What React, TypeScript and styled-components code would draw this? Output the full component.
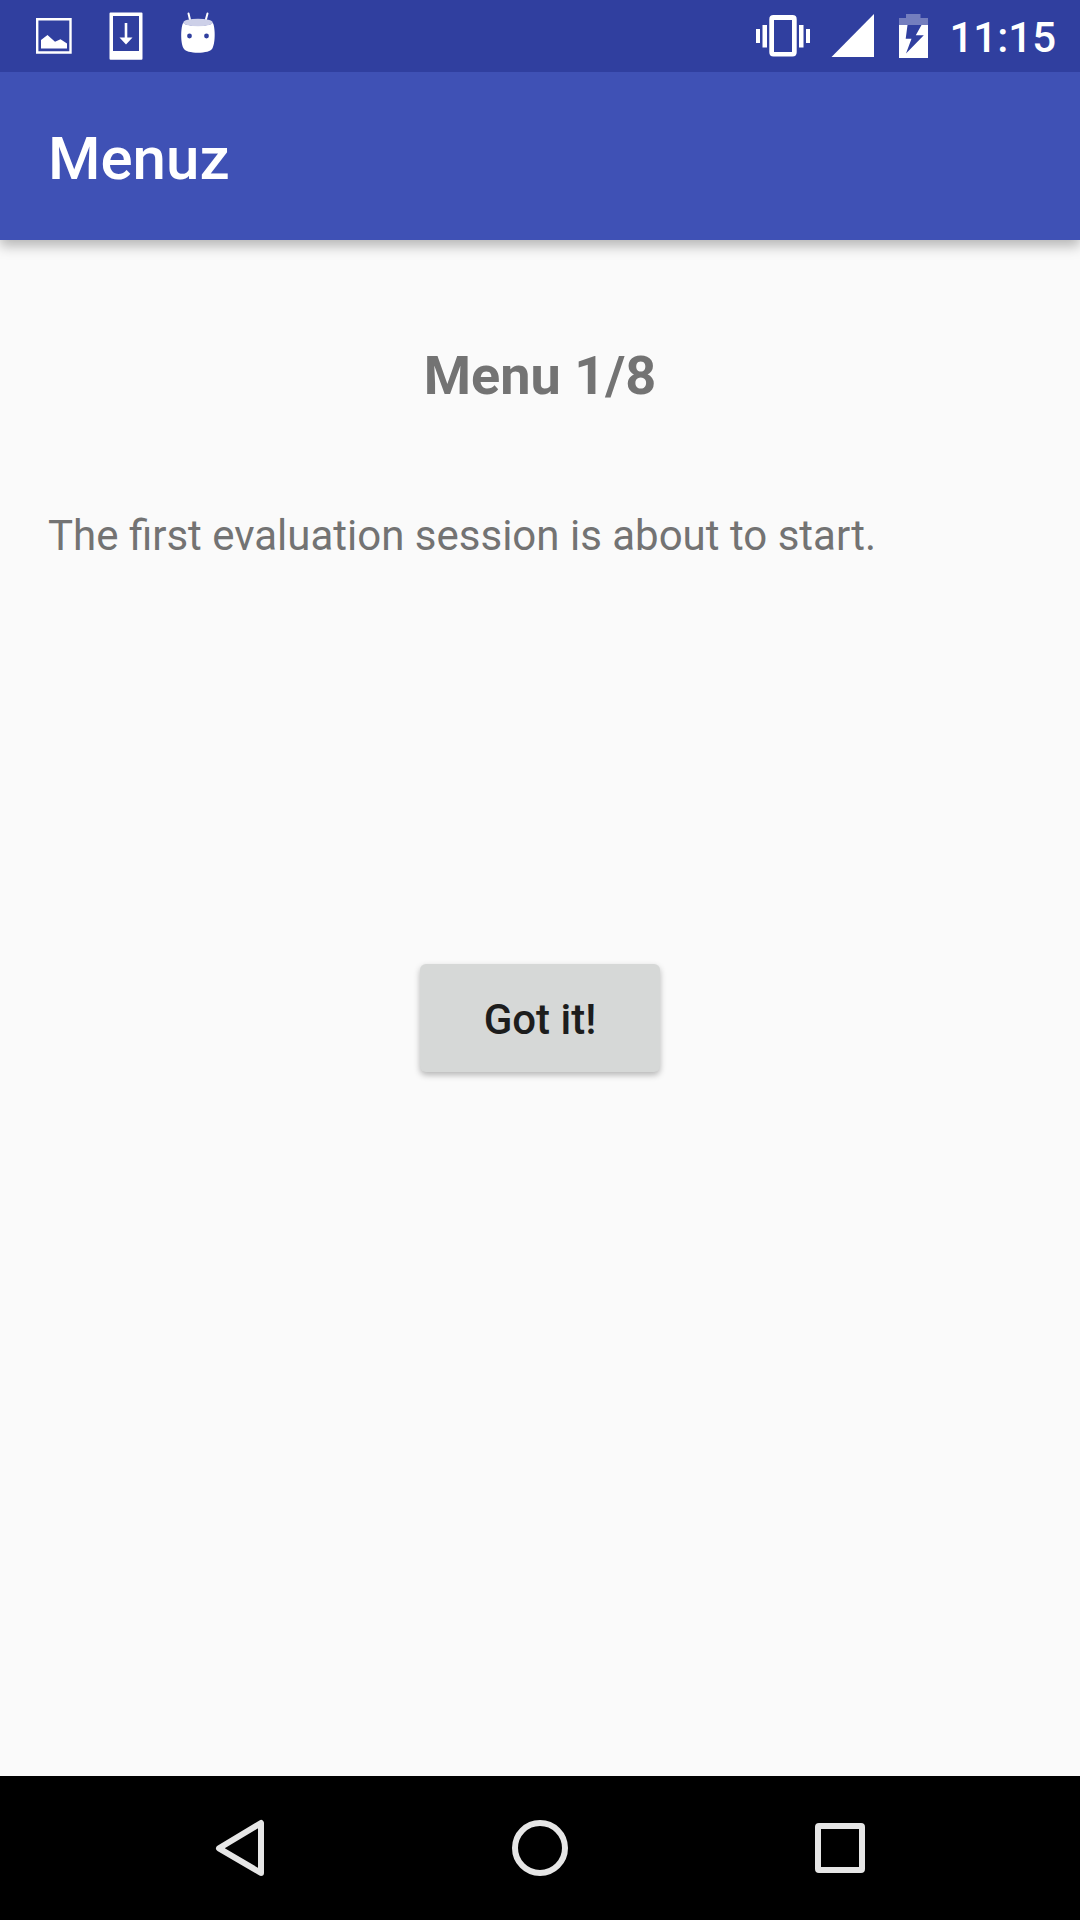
import React from "react";
import styled, { createGlobalStyle } from "styled-components";

const GlobalStyle = createGlobalStyle`
  *, *::before, *::after { box-sizing: border-box; }
  body {
    margin: 0;
    background: #fafafa;
    font-family: Roboto, "Noto Sans", sans-serif;
    -webkit-font-smoothing: antialiased;
  }
`;

const Screen = styled.div`
  display: flex;
  flex-direction: column;
  min-height: 100vh;
`;

const StatusBar = styled.div`
  position: relative;
  z-index: 1;
  display: flex;
  justify-content: space-between;
  height: 72px;
  padding: 0 24px 0 18px;
  background: #303f9f;
  color: #fff;
`;

const StatusGroup = styled.div`
  display: flex;
  align-items: center;
`;

const StatusIcon = styled.svg<{ $width: number }>`
  display: block;
  flex: none;
  width: ${({ $width }) => $width}px;
  height: 72px;
  fill: currentColor;
`;

const Clock = styled.time`
  padding: 4px 0 0 18px;
  font-size: 42px;
  font-weight: 500;
  line-height: 50px;
`;

const AppBar = styled.header`
  display: flex;
  align-items: center;
  height: 168px;
  padding: 6px 48px 0;
  background: #3f51b5;
  color: #fff;
  box-shadow: 0 6px 12px rgba(0, 0, 0, 0.28);
`;

const Title = styled.h1`
  margin: 0;
  font-size: 60px;
  font-weight: 500;
  line-height: 72px;
`;

const Content = styled.main`
  display: flex;
  flex: 1;
  flex-direction: column;
  padding: 104px 48px;
  color: #737373;
`;

const Heading = styled.h2`
  margin: 0 0 103px;
  font-size: 54px;
  font-weight: 700;
  line-height: 64px;
  text-align: center;
`;

const Message = styled.p`
  min-height: 453px;
  margin: 0;
  font-size: 42px;
  line-height: 50px;
`;

const ConfirmButton = styled.button`
  align-self: center;
  min-width: 240px;
  height: 108px;
  padding: 4px 24px 0;
  border: 0;
  border-radius: 6px;
  background: #d6d8d7;
  color: #1d1d1d;
  font: inherit;
  font-size: 42px;
  font-weight: 500;
  line-height: 50px;
  box-shadow: 0 3px 6px rgba(0, 0, 0, 0.28);
  cursor: pointer;
`;

const NavBar = styled.nav`
  display: grid;
  grid-template-columns: repeat(3, 1fr);
  height: 144px;
  padding: 0 90px;
  background: #000;
`;

const NavButton = styled.button`
  display: grid;
  place-items: center;
  padding: 0;
  border: 0;
  background: transparent;
  color: #e6e6e6;
  cursor: pointer;
`;

const NavIcon = styled.svg`
  width: 72px;
  height: 72px;
  fill: none;
  stroke: currentColor;
  stroke-width: 6;
  stroke-linejoin: round;
`;

export default function App() {
  return (
    <Screen>
      <GlobalStyle />
      <StatusBar>
        <StatusGroup>
          <StatusIcon $width={72} viewBox="0 0 72 72" aria-label="Screenshot saved">
            <path fillRule="evenodd" d="M18 18H53.7V53.7H18ZM20.4 20.4V51.3H51.3V20.4Z" />
            <path d="M23 48.5V40L29.5 35L37 41.8L42.5 39.3L49 43.5V48.5Z" />
          </StatusIcon>
          <StatusIcon $width={72} viewBox="0 0 72 72" aria-label="Download">
            <path fillRule="evenodd" d="M20.5 12.5H51.5Q52.5 12.5 52.5 13.5V58.5Q52.5 59.7 51.5 59.7H20.5Q19.5 59.7 19.5 58.5V13.5Q19.5 12.5 20.5 12.5ZM23 16V51H49V16Z" />
            <path d="M34.7 23H37.3V37.5H42.5L36 44.5L29.5 37.5H34.7Z" />
          </StatusIcon>
          <StatusIcon $width={72} viewBox="0 0 72 72" aria-label="System update">
            <path d="M26.5 13.5L28.3 21M45.5 13.5L43.5 21" stroke="currentColor" strokeWidth="2" strokeLinecap="round" />
            <path
              fillRule="evenodd"
              d="M21.3 22.8C24.5 27 47.5 27 50.7 22.8C53.2 26 53.7 42.5 50.5 48.2C48.2 54.2 23.8 54.2 21.5 48.2C18.3 42.5 18.8 26 21.3 22.8ZM29.9 36A2.4 2.4 0 1 0 25.1 36A2.4 2.4 0 1 0 29.9 36ZM46.9 36A2.4 2.4 0 1 0 42.1 36A2.4 2.4 0 1 0 46.9 36Z"
            />
            <ellipse cx="36" cy="22.5" rx="14.7" ry="3.8" fill="#cdd0e8" />
          </StatusIcon>
        </StatusGroup>
        <StatusGroup>
          <StatusIcon $width={72} viewBox="0 0 72 72" aria-label="Vibrate">
            <path
              fillRule="evenodd"
              d="M26.5 15H45.5Q49.7 15 49.7 19.2V52.3Q49.7 56.5 45.5 56.5H26.5Q22.3 56.5 22.3 52.3V19.2Q22.3 15 26.5 15ZM27 20V52H45V20Z"
            />
            <path d="M15.5 25H20V47.5H15.5ZM9 29H13V43H9ZM52 25H56.5V47.5H52ZM59 29H63V43H59Z" />
          </StatusIcon>
          <StatusIcon $width={72} viewBox="0 0 72 72" aria-label="Signal strength">
            <path d="M55 14V57H12.5Z" />
          </StatusIcon>
          <StatusIcon $width={40} viewBox="0 0 40 72" aria-label="Battery charging">
            <path opacity="0.33" d="M8 25V18H15V14H29.5V18H37V25Z" />
            <path fillRule="evenodd" d="M8 25H16.5L14.7 38.8H20.5L15 53.5L32.8 35.3H24.8L30.5 25H37V58H8Z" />
          </StatusIcon>
          <Clock dateTime="11:15">11:15</Clock>
        </StatusGroup>
      </StatusBar>
      <AppBar>
        <Title>Menuz</Title>
      </AppBar>
      <Content>
        <Heading>Menu 1/8</Heading>
        <Message>The first evaluation session is about to start.</Message>
        <ConfirmButton type="button">Got it!</ConfirmButton>
      </Content>
      <NavBar aria-label="System navigation">
        <NavButton type="button" aria-label="Back">
          <NavIcon viewBox="0 0 72 72">
            <path d="M15 36.3L57 11V61Z" />
          </NavIcon>
        </NavButton>
        <NavButton type="button" aria-label="Home">
          <NavIcon viewBox="0 0 72 72">
            <circle cx="36" cy="36" r="25" />
          </NavIcon>
        </NavButton>
        <NavButton type="button" aria-label="Recent apps">
          <NavIcon viewBox="0 0 72 72">
            <rect x="14" y="14" width="44" height="44" rx="1" />
          </NavIcon>
        </NavButton>
      </NavBar>
    </Screen>
  );
}
